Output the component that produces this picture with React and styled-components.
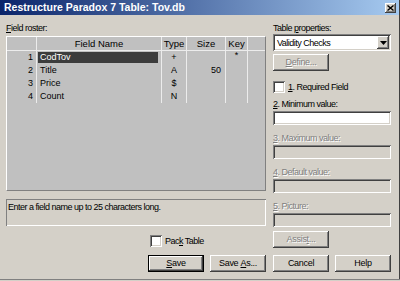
import React from "react";
import styled, { createGlobalStyle } from "styled-components";

const FONT = `"Liberation Sans", Arial, sans-serif`;

const GlobalStyle = createGlobalStyle`
  html, body {
    margin: 0;
    padding: 0;
    background: #d4d0c8;
  }
  body {
    font-family: ${FONT};
    font-size: 9px;
    letter-spacing: -0.5px;
    color: #000;
  }
`;

const raised = `
  box-shadow: inset -1px -1px #404040, inset 1px 1px #ffffff,
    inset -2px -2px #808080, inset 2px 2px #d4d0c8;
`;

const sunken = `
  box-shadow: inset 1px 1px #808080, inset -1px -1px #ffffff,
    inset 2px 2px #404040, inset -2px -2px #d4d0c8;
`;

const Window = styled.div`
  width: 400px;
  height: 281px;
  box-sizing: border-box;
  background: #d4d0c8;
  box-shadow: inset 0 -1px #d4d0c8, inset 0 -2px #808080, inset -1px 0 #404040;
  display: flex;
  flex-direction: column;
  overflow: hidden;
`;

const TitleBar = styled.div`
  height: 15px;
  flex: none;
  margin-right: 1px;
  padding: 0 3px 0 4px;
  background: linear-gradient(to right, #0a246a, #a6caf0);
  display: flex;
  align-items: center;
  justify-content: space-between;
`;

const Title = styled.span`
  color: #fff;
  font-weight: bold;
  font-size: 10.5px;
  letter-spacing: 0;
  line-height: 15px;
  white-space: nowrap;
`;

const CloseButton = styled.div`
  width: 11px;
  height: 10px;
  background: #d4d0c8;
  ${raised}
  display: flex;
  align-items: center;
  justify-content: center;
`;

const Body = styled.div`
  display: grid;
  grid-template-columns: 260px 118px;
  column-gap: 7px;
  padding: 8px 0 0 6px;
`;

const Column = styled.div`
  display: flex;
  flex-direction: column;
`;

const Label = styled.div`
  line-height: 11px;
  height: 11px;
  white-space: nowrap;
  margin-top: ${(p) => p.$top || 0}px;
  color: ${(p) => (p.$disabled ? "#808080" : "#000")};
  text-shadow: ${(p) => (p.$disabled ? "1px 1px #ffffff" : "none")};
`;

/* ---------- field roster grid ---------- */

const COLS = "30px 125px 25px 39px 22px 1fr";

const Roster = styled.div`
  margin-top: 2px;
  height: 155px;
  box-sizing: border-box;
  letter-spacing: 0;
  background: #c0c0c0;
  border-top: 1px solid #ffffff;
  border-left: 1px solid #ffffff;
  border-right: 1px solid #808080;
  border-bottom: 1px solid #808080;
`;

const HeaderRow = styled.div`
  display: grid;
  grid-template-columns: ${COLS};
  height: 14px;
  box-sizing: border-box;
  border-bottom: 1px solid #ececec;
`;

const HeaderCell = styled.div`
  font-size: 9.5px;
  line-height: 13px;
  text-align: center;
  border-right: ${(p) => (p.$last ? "none" : "1px solid #ececec")};
`;

const Row = styled.div`
  display: grid;
  grid-template-columns: ${COLS};
  height: 13px;
`;

const Cell = styled.div`
  line-height: 13px;
  text-align: ${(p) => p.$align || "left"};
  padding: 0 ${(p) => p.$padRight || 0}px 0 0;
  border-right: ${(p) => (p.$last ? "none" : "1px solid #ececec")};
  white-space: nowrap;
  overflow: hidden;
`;

const NameCell = styled.div`
  padding: 1px 3px 1px 1px;
  border-right: 1px solid #ececec;
`;

const NameText = styled.div`
  height: 11px;
  line-height: 11px;
  padding-left: 2px;
  background: ${(p) => (p.$selected ? "#3c3c3c" : "transparent")};
  color: ${(p) => (p.$selected ? "#ffffff" : "#000")};
`;

const KeyMark = styled.span`
  position: relative;
  top: -2px;
`;

const Message = styled.div`
  margin-top: 8px;
  height: 27px;
  box-sizing: border-box;
  padding: 3px 2px;
  line-height: 11px;
  box-shadow: inset 1px 1px #808080, inset -1px -1px #ffffff;
`;

const CheckRow = styled.label`
  display: flex;
  align-items: center;
  gap: 3px;
  height: 13px;
  margin-top: ${(p) => p.$top || 0}px;
  padding-left: ${(p) => p.$indent || 0}px;
  white-space: nowrap;
`;

const CheckBox = styled.span`
  width: 12px;
  height: 12px;
  flex: none;
  background: #fff;
  ${sunken}
`;

const ButtonRow = styled.div`
  display: flex;
  justify-content: flex-end;
  gap: 6px;
  margin-top: ${(p) => p.$top || 0}px;
`;

const Button = styled.div`
  width: 56px;
  height: 17px;
  box-sizing: border-box;
  background: #d4d0c8;
  display: flex;
  align-items: center;
  justify-content: center;
  line-height: 11px;
  letter-spacing: -0.3px;
  white-space: pre;
  margin-top: ${(p) => p.$top || 0}px;
  color: ${(p) => (p.$disabled ? "#808080" : "#000")};
  text-shadow: ${(p) => (p.$disabled ? "1px 1px #ffffff" : "none")};
  border: ${(p) => (p.$default ? "1px solid #000" : "none")};
  ${raised}
`;

/* ---------- right side controls ---------- */

const Select = styled.div`
  height: 17px;
  box-sizing: border-box;
  background: #fff;
  ${sunken}
  display: flex;
  align-items: center;
  justify-content: space-between;
  padding: 2px 2px 2px 4px;
`;

const SelectArrow = styled.div`
  width: 12px;
  height: 13px;
  background: #d4d0c8;
  ${raised}
  display: flex;
  align-items: center;
  justify-content: center;
`;

const Field = styled.div`
  height: 14px;
  margin-top: 1px;
  background: ${(p) => (p.$disabled ? "#d4d0c8" : "#ffffff")};
  ${sunken}
`;

const rows = [
  { n: 1, name: "CodTov", type: "+", size: "", key: true },
  { n: 2, name: "Title", type: "A", size: "50" },
  { n: 3, name: "Price", type: "$", size: "" },
  { n: 4, name: "Count", type: "N", size: "" },
];

const App = () => {
  return (
    <Window>
      <GlobalStyle />
      <TitleBar>
        <Title>Restructure Paradox 7 Table: Tov.db</Title>
        <CloseButton>
          <svg width="7" height="6" viewBox="0 0 7 6">
            <path d="M0.5 0.5 L6.5 5.5 M6.5 0.5 L0.5 5.5" stroke="#000" strokeWidth="1.4" />
          </svg>
        </CloseButton>
      </TitleBar>

      <Body>
        <Column>
          <Label>
            <u>F</u>ield roster:
          </Label>
          <Roster>
            <HeaderRow>
              <HeaderCell />
              <HeaderCell>Field Name</HeaderCell>
              <HeaderCell>Type</HeaderCell>
              <HeaderCell>Size</HeaderCell>
              <HeaderCell>Key</HeaderCell>
              <HeaderCell $last />
            </HeaderRow>
            {rows.map((r) => (
              <Row key={r.n}>
                <Cell $align="right" $padRight={3}>
                  {r.n}
                </Cell>
                <NameCell>
                  <NameText $selected={r.n === 1}>{r.name}</NameText>
                </NameCell>
                <Cell $align="center">{r.type}</Cell>
                <Cell $align="right" $padRight={4}>
                  {r.size}
                </Cell>
                <Cell $align="center">{r.key && <KeyMark>*</KeyMark>}</Cell>
                <Cell $last />
              </Row>
            ))}
          </Roster>
          <Message>Enter a field name up to 25 characters long.</Message>
          <CheckRow $top={8} $indent={144}>
            <CheckBox />
            <span>
              Pac<u>k</u> Table
            </span>
          </CheckRow>
          <ButtonRow $top={8}>
            <Button $default>
              <u>S</u>ave
            </Button>
            <Button>
              Save <u>A</u>s...
            </Button>
          </ButtonRow>
        </Column>

        <Column>
          <Label>
            Table <u>p</u>roperties:
          </Label>
          <Select>
            <span>Validity Checks</span>
            <SelectArrow>
              <svg width="7" height="4" viewBox="0 0 7 4">
                <path d="M0 0 H7 L3.5 4 Z" fill="#000" />
              </svg>
            </SelectArrow>
          </Select>
          <Button $top={3} $disabled>
            <span>
              <u>D</u>efine...
            </span>
          </Button>
          <CheckRow $top={9}>
            <CheckBox />
            <span>
              <u>1</u>. Required Field
            </span>
          </CheckRow>
          <Label $top={6}>
            <u>2</u>. Minimum value:
          </Label>
          <Field />
          <Label $top={8} $disabled>
            <u>3</u>. Maximum value:
          </Label>
          <Field $disabled />
          <Label $top={8} $disabled>
            <u>4</u>. Default value:
          </Label>
          <Field $disabled />
          <Label $top={8} $disabled>
            <u>5</u>. Picture:
          </Label>
          <Field $disabled />
          <Button $top={4} $disabled>
            <span>
              Assis<u>t</u>...
            </span>
          </Button>
          <ButtonRow $top={7}>
            <Button>Cancel</Button>
            <Button>Help</Button>
          </ButtonRow>
        </Column>
      </Body>
    </Window>
  );
};

export default App;
